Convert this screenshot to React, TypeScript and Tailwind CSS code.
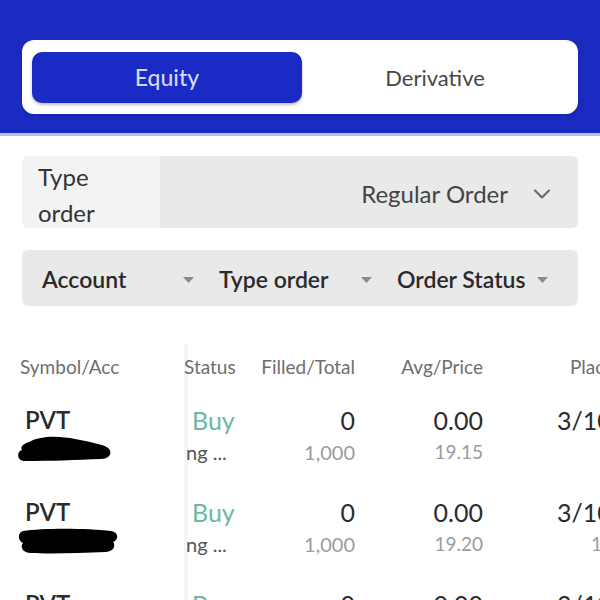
import { ChevronDown } from "lucide-react";

const font = { fontFamily: "Lato, 'Noto Sans', sans-serif" };

type Order = {
  symbol: string;
  side: string;
  status: string;
  filled: string;
  total: string;
  avg: string;
  price: string;
  placed: string;
  placed2: string;
};

const orders: Order[] = [
  { symbol: "PVT", side: "Buy", status: "ng ...", filled: "0", total: "1,000", avg: "0.00", price: "19.15", placed: "3/10", placed2: "" },
  { symbol: "PVT", side: "Buy", status: "ng ...", filled: "0", total: "1,000", avg: "0.00", price: "19.20", placed: "3/10", placed2: "1" },
  { symbol: "PVT", side: "Buy", status: "ng ...", filled: "0", total: "1,000", avg: "0.00", price: "19.20", placed: "3/10", placed2: "" },
];

function Caret() {
  return (
    <svg width="11" height="6" viewBox="0 0 11 6" className="shrink-0">
      <path d="M0 0 H11 L5.5 6 Z" fill="#8a8a8a" />
    </svg>
  );
}

// hand-drawn marker blot that hides the account number
function Redacted({ wide }: { wide?: boolean }) {
  return (
    <svg width="102" height="28" viewBox="0 0 102 28" className="block">
      {wide ? (
        <path d="M6 4 C 24 1, 70 1, 94 4 C 102 5, 102 13, 96 15 C 99 18, 97 25, 88 25 C 64 26, 34 27, 14 26 C 5 26, 3 19, 6 16 C 0 13, 1 5, 6 4 Z" fill="#000" />
      ) : (
        <path d="M12 7 C 24 0, 44 1, 58 4 C 72 7, 86 9, 91 13 C 96 17, 93 24, 84 24 C 60 25, 32 26, 8 26 C 0 26, -1 17, 5 15 C 3 12, 6 9, 12 7 Z" fill="#000" />
      )}
    </svg>
  );
}

function OrderRow({ o, i }: { o: Order; i: number }) {
  return (
    <div className="flex h-[92px]">
      <div className="w-[188px] shrink-0 pl-[17px] pt-[16px] border-r-[4px] border-[#f5f5f5]">
        <div className="pl-[8px] text-[24px] font-semibold leading-[26px] text-[#2b2b2b]">{o.symbol}</div>
        <div className="mt-[2px]">
          <Redacted wide={i === 1} />
        </div>
      </div>
      <div className="w-[70px] shrink-0 pt-[16px] whitespace-nowrap">
        <div className="pl-[4px] text-[25px] leading-[26px] text-[#6cb8a4]">{o.side}</div>
        <div className="-ml-[2px] mt-[6px] text-[20px] leading-[26px] text-[#555]">{o.status}</div>
      </div>
      <div className="w-[97px] shrink-0 pt-[16px] text-right">
        <div className="text-[25px] leading-[26px] text-[#2b2b2b]">{o.filled}</div>
        <div className="mt-[6px] text-[20px] leading-[26px] text-[#9b9b9b]">{o.total}</div>
      </div>
      <div className="w-[128px] shrink-0 pt-[16px] text-right">
        <div className="text-[25px] leading-[26px] text-[#2b2b2b]">{o.avg}</div>
        <div className="mt-[6px] text-[19px] leading-[26px] text-[#9b9b9b]">{o.price}</div>
      </div>
      <div className="flex-1 pl-[74px] pt-[16px] whitespace-nowrap">
        <div className="text-[25px] leading-[26px] text-[#2b2b2b]">{o.placed}</div>
        <div className="mt-[6px] pl-[34px] text-[19px] leading-[26px] text-[#9b9b9b]">{o.placed2}</div>
      </div>
    </div>
  );
}

export default function App() {
  return (
    <div className="w-[600px] h-[600px] overflow-hidden bg-white" style={font}>
      {/* ── Header / segment ─────────────────────────────────────── */}
      <div className="bg-[#1b2bc2] pt-[40px] pb-[19px] px-[22px] border-b-[3px] border-[#b8bff0]">
        <div className="flex h-[74px] items-center rounded-[12px] bg-white px-[10px] shadow-[0_2px_4px_rgba(0,0,0,0.15)]">
          <div className="flex h-[51px] w-[270px] items-center justify-center rounded-[10px] bg-[#1a2ac4] text-[23px] font-medium text-[#d3d8f7] shadow-[0_2px_3px_rgba(0,0,0,0.25)]">
            Equity
          </div>
          <div className="flex flex-1 items-center justify-center text-[22px] text-[#474747]">Derivative</div>
        </div>
      </div>

      {/* ── Type order select ────────────────────────────────────── */}
      <div className="mx-[22px] mt-[20px] flex h-[72px] overflow-hidden rounded-[6px]">
        <div className="w-[138px] shrink-0 bg-[#f3f3f3] pl-[16px] pt-[3px] text-[24px] leading-[36px] text-[#333]">
          Type
          <br />
          order
        </div>
        <div className="flex flex-1 items-center justify-end gap-[20px] bg-[#e9e9e9] pr-[22px] pt-[4px] text-[24px] text-[#444]">
          <span>Regular Order</span>
          <ChevronDown className="h-[28px] w-[28px] text-[#666]" strokeWidth={1.8} />
        </div>
      </div>

      {/* ── Filters ──────────────────────────────────────────────── */}
      <div className="mx-[22px] mt-[22px] flex h-[56px] items-center rounded-[6px] bg-[#e9e9e9] pl-[20px] pt-[3px] text-[23px] font-semibold text-[#2a2a2a]">
        <div className="flex w-[177px] items-center justify-between pr-[25px]">
          <span>Account</span>
          <Caret />
        </div>
        <div className="flex w-[178px] items-center justify-between pr-[25px]">
          <span>Type order</span>
          <Caret />
        </div>
        <div className="flex flex-1 items-center justify-between pr-[30px]">
          <span>Order Status</span>
          <Caret />
        </div>
      </div>

      {/* ── Table ────────────────────────────────────────────────── */}
      <div className="mt-[38px]">
        <div className="flex h-[47px] items-center text-[19px] text-[#6e6e6e] whitespace-nowrap">
          <div className="flex h-full w-[188px] shrink-0 items-center pl-[20px] border-r-[4px] border-[#f5f5f5]">
            Symbol/Acc
          </div>
          <div className="w-[70px] shrink-0 -ml-[4px]">Status</div>
          <div className="w-[101px] shrink-0 text-right">Filled/Total</div>
          <div className="w-[128px] shrink-0 text-right">Avg/Price</div>
          <div className="flex-1 pl-[87px]">Placed</div>
        </div>
        {orders.map((o, i) => (
          <OrderRow key={i} o={o} i={i} />
        ))}
      </div>
    </div>
  );
}
